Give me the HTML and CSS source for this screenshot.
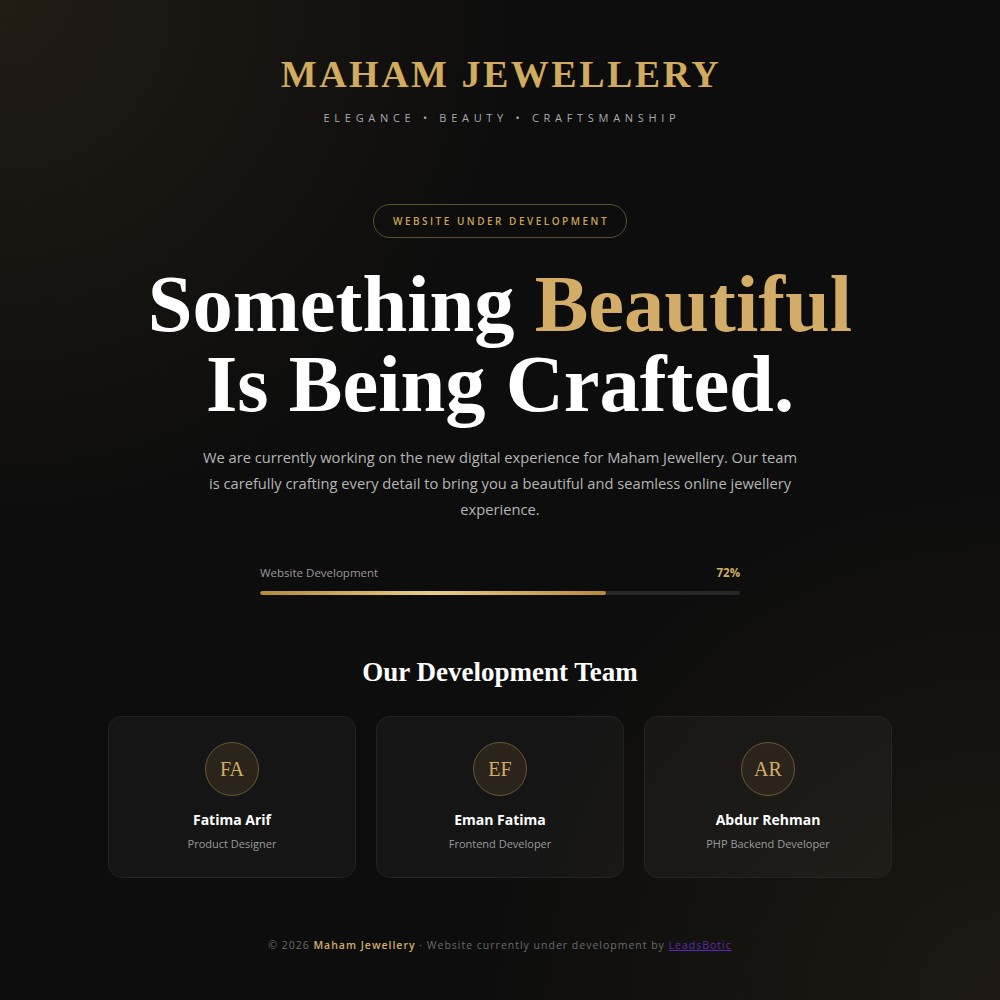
FILE: index.html
```html
<!DOCTYPE html>
<html lang="en">
<head>
<meta charset="utf-8">
<title>Maham Jewellery — Coming Soon</title>
<link rel="stylesheet" href="styles.css">
</head>
<body>
<div class="page">
  <header class="brand">
    <h1 class="logo">MAHAM JEWELLERY</h1>
    <p class="tagline">ELEGANCE • BEAUTY • CRAFTSMANSHIP</p>
  </header>

  <section class="hero">
    <span class="badge">WEBSITE UNDER DEVELOPMENT</span>
    <h2 class="headline">Something <span class="gold">Beautiful</span><br>Is Being Crafted.</h2>
    <p class="intro">We are currently working on the new digital experience for Maham Jewellery. Our team is carefully crafting every detail to bring you a beautiful and seamless online jewellery experience.</p>

    <div class="progress">
      <div class="progress-head">
        <span class="progress-label">Website Development</span>
        <span class="progress-value">72%</span>
      </div>
      <div class="track"><div class="fill" style="width:72%"></div></div>
    </div>
  </section>

  <section class="team">
    <h3 class="team-title">Our Development Team</h3>
    <div class="cards">
      <div class="card">
        <div class="avatar">FA</div>
        <div class="name">Fatima Arif</div>
        <div class="role">Product Designer</div>
      </div>
      <div class="card">
        <div class="avatar">EF</div>
        <div class="name">Eman Fatima</div>
        <div class="role">Frontend Developer</div>
      </div>
      <div class="card">
        <div class="avatar">AR</div>
        <div class="name">Abdur Rehman</div>
        <div class="role">PHP Backend Developer</div>
      </div>
    </div>
  </section>

  <footer class="footer">
    © 2026 <span class="f-brand">Maham Jewellery</span> · Website currently under development by <a class="f-link" href="#">LeadsBotic</a>
  </footer>
</div>
</body>
</html>
```

FILE: styles.css
```css
* { box-sizing: border-box; }
html, body { margin: 0; padding: 0; }
body {
  width: 1000px;
  min-height: 1000px;
  background:
    radial-gradient(ellipse 520px 520px at 0% 0%, rgba(40,33,22,0.75), rgba(40,33,22,0) 100%),
    radial-gradient(ellipse 520px 520px at 100% 100%, rgba(36,30,20,0.7), rgba(36,30,20,0) 100%),
    #0d0d0d;
  color: #fff;
  font-family: "Open Sans", "Liberation Sans", sans-serif;
}
.page {
  display: flex;
  flex-direction: column;
  align-items: center;
  padding-top: 52px;
}
.brand { text-align: center; }
.logo {
  margin: 0;
  font-family: "Liberation Serif", serif;
  font-weight: 700;
  font-size: 38px;
  line-height: 44px;
  letter-spacing: 2.5px;
  color: #d2ab5e;
  padding-left: 2px;
}
.tagline {
  margin: 15px 0 0;
  font-size: 11px;
  font-weight: 500;
  letter-spacing: 4.7px;
  color: #aaaab0;
  line-height: 14px;
  padding-left: 4px;
}
.hero {
  display: flex;
  flex-direction: column;
  align-items: center;
  margin-top: 79px;
}
.badge {
  display: inline-block;
  height: 34px;
  line-height: 32px;
  padding: 0 17px 0 19px;
  border: 1px solid #5e4f2e;
  border-radius: 17px;
  font-size: 10px;
  letter-spacing: 2.5px;
  color: #caa35a;
  font-weight: 600;
}
.headline {
  margin: 26px 0 0;
  text-align: center;
  font-family: "Liberation Serif", serif;
  font-weight: 700;
  font-size: 80.5px;
  line-height: 80px;
  color: #fff;
}
.gold { color: #d3ad67; }
.intro {
  margin: 20px 0 0;
  width: 600px;
  text-align: center;
  font-size: 14.7px;
  line-height: 26px;
  color: #b5b5b5;
}
.progress {
  width: 480px;
  margin-top: 43px;
}
.progress-head {
  display: flex;
  justify-content: space-between;
  align-items: center;
  font-size: 11.5px;
  line-height: 16px;
}
.progress-label { color: #9a9a9a; }
.progress-value { color: #d3ad67; font-weight: 700; }
.track {
  margin-top: 10px;
  height: 4px;
  border-radius: 2px;
  background: #262626;
  overflow: hidden;
}
.fill {
  height: 100%;
  border-radius: 2px;
  background: linear-gradient(90deg, #b48a3a 0%, #e8cd86 50%, #b8893a 100%);
}
.team {
  margin-top: 61px;
  display: flex;
  flex-direction: column;
  align-items: center;
}
.team-title {
  margin: 0;
  font-family: "Liberation Serif", serif;
  font-weight: 700;
  font-size: 27px;
  line-height: 32px;
  color: #fff;
}
.cards {
  margin-top: 28px;
  display: grid;
  grid-template-columns: repeat(3, 248px);
  gap: 20px;
}
.card {
  height: 162px;
  border-radius: 14px;
  background: rgba(255,255,255,0.035);
  border: 1px solid #242424;
  display: flex;
  flex-direction: column;
  align-items: center;
  padding-top: 25px;
}
.avatar {
  width: 54px;
  height: 54px;
  border-radius: 50%;
  background: #2a241b;
  border: 1px solid #6b5832;
  display: flex;
  align-items: center;
  justify-content: center;
  font-family: "Liberation Serif", serif;
  font-size: 20px;
  color: #d3ad67;
}
.name {
  margin-top: 15px;
  font-size: 14px;
  font-weight: 700;
  line-height: 18px;
  color: #fff;
}
.role {
  margin-top: 8px;
  font-size: 11px;
  line-height: 14px;
  color: #9a9a9a;
}
.footer {
  margin-top: 60px;
  font-size: 10.5px;
  letter-spacing: 1px;
  color: #6a6a6a;
}
.f-brand { color: #d3ad67; font-weight: 600; }
.f-link { color: #5a2bb5; text-decoration: underline; }
```
